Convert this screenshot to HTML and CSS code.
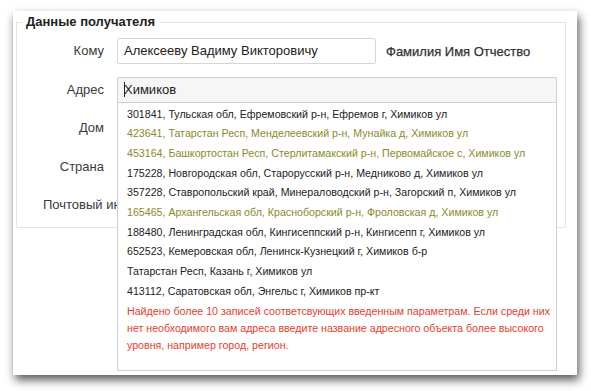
FILE: index.html
```html
<!DOCTYPE html>
<html lang="ru">
<head>
<meta charset="utf-8">
<title>Данные получателя</title>
<link rel="stylesheet" href="styles.css">
</head>
<body>
<div class="card">
  <fieldset class="group">
    <legend class="group-title">Данные получателя</legend>
    <div class="form">
      <label class="label">Кому</label>
      <div class="field">
        <div class="input input-name">Алексееву Вадиму Викторовичу</div>
        <span class="hint">Фамилия Имя Отчество</span>
      </div>

      <label class="label">Адрес</label>
      <div class="field field-address">
        <div class="input input-address focused"><span class="caret"></span>Химиков</div>
        <div class="suggest">
          <ul class="suggest-list">
            <li>301841, Тульская обл, Ефремовский р-н, Ефремов г, Химиков ул</li>
            <li class="alt">423641, Татарстан Респ, Менделеевский р-н, Мунайка д, Химиков ул</li>
            <li class="alt">453164, Башкортостан Респ, Стерлитамакский р-н, Первомайское с, Химиков ул</li>
            <li>175228, Новгородская обл, Старорусский р-н, Медниково д, Химиков ул</li>
            <li>357228, Ставропольский край, Минераловодский р-н, Загорский п, Химиков ул</li>
            <li class="alt">165465, Архангельская обл, Красноборский р-н, Фроловская д, Химиков ул</li>
            <li>188480, Ленинградская обл, Кингисеппский р-н, Кингисепп г, Химиков ул</li>
            <li>652523, Кемеровская обл, Ленинск-Кузнецкий г, Химиков б-р</li>
            <li>Татарстан Респ, Казань г, Химиков ул</li>
            <li>413112, Саратовская обл, Энгельс г, Химиков пр-кт</li>
          </ul>
          <p class="suggest-note">Найдено более 10 записей соответсвующих введенным параметрам. Если среди них нет необходимого вам адреса введите название адресного объекта более высокого уровня, например город, регион.</p>
        </div>
      </div>

      <label class="label">Дом</label>
      <div class="field"><div class="input input-short"></div></div>

      <label class="label">Страна</label>
      <div class="field"><div class="input input-short"></div></div>

      <label class="label label-overflow">Почтовый индекс</label>
      <div class="field"><div class="input input-short"></div></div>
    </div>
  </fieldset>
</div>
</body>
</html>
```

FILE: styles.css
```css
* {
  box-sizing: border-box;
}

html, body {
  margin: 0;
  padding: 0;
  background: #ffffff;
}

body {
  font-family: "Liberation Sans", Arial, Helvetica, sans-serif;
  color: #333333;
  width: 591px;
  height: 391px;
  overflow: hidden;
}

.card {
  margin: 11px 0 0 13px;
  width: 564px;
  height: 364px;
  background: #ffffff;
  box-shadow: 2px 5px 9px rgba(0, 0, 0, 0.65);
  padding: 3px 0 0 3px;
}

.group {
  margin: 0;
  width: 550px;
  border: 1px solid #e4e4e4;
  padding: 8px 0 9px 26px;
}

.group-title {
  padding: 0 5px 0 4px;
  margin-left: -21px;
  font-size: 13px;
  line-height: 16px;
  font-weight: bold;
  color: #222222;
}

.form {
  display: grid;
  grid-template-columns: 61px 1fr;
  column-gap: 13px;
  row-gap: 12.5px;
  align-items: center;
}

.label {
  font-size: 13px;
  line-height: 16px;
  color: #3a3a3a;
  text-align: right;
  white-space: nowrap;
}

.field {
  display: flex;
  align-items: center;
  gap: 10px;
  position: relative;
}

.input {
  height: 26px;
  border: 1px solid #d6d6d6;
  background: #ffffff;
  border-radius: 2px;
  font-size: 13px;
  line-height: 24px;
  padding: 0 6px;
  color: #222222;
  white-space: nowrap;
}

.input-name {
  width: 259px;
}

.input-address {
  width: 440px;
}

.input-short {
  width: 200px;
}

.focused {
  background: #f6f6f6;
  border-color: #cfcfcf;
  border-radius: 2px 2px 0 0;
}

.caret {
  display: inline-block;
  width: 1px;
  height: 15px;
  background: #222222;
  vertical-align: -3px;
  margin-right: -1px;
}

.hint {
  font-size: 13px;
  color: #333333;
  white-space: nowrap;
  -webkit-text-stroke: 0.25px #333333;
}

.suggest {
  position: absolute;
  left: 0;
  top: 26px;
  width: 440px;
  height: 268px;
  background: #ffffff;
  border: 1px solid #cfcfcf;
  border-top: none;
  padding: 2px 2px 0 9px;
  z-index: 2;
}

.suggest-list {
  list-style: none;
  margin: 0;
  padding: 0;
}

.suggest-list li {
  font-size: 10.65px;
  line-height: 19.7px;
  color: #222222;
  white-space: nowrap;
}

.suggest-list li.alt {
  color: #8a8a2c;
}

.suggest-note {
  margin: 1px 0 0 0;
  font-size: 10.65px;
  line-height: 17px;
  color: #e2412f;
}
```
